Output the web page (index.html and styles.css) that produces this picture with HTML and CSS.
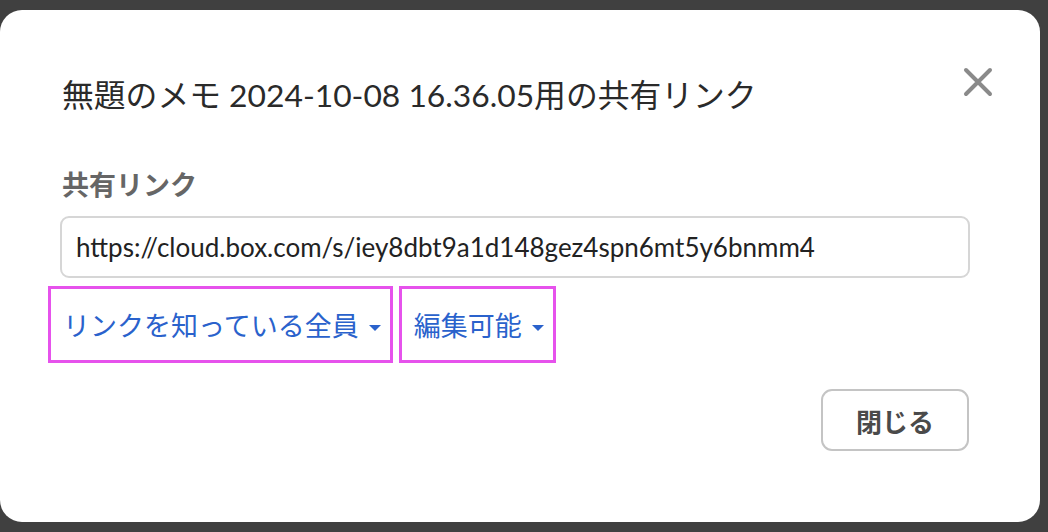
FILE: index.html
```html
<!DOCTYPE html>
<html lang="ja">
<head>
<meta charset="utf-8">
<link rel="stylesheet" href="styles.css">
</head>
<body>
<div class="modal">
  <button class="close" aria-label="閉じる">
    <svg width="30" height="30" viewBox="0 0 30 30"><path d="M3 3 L27 27 M27 3 L3 27" stroke="#8a8a8a" stroke-width="4" stroke-linecap="round"/></svg>
  </button>
  <h1 class="title">無題のメモ 2024-10-08 16.36.05用の共有リンク</h1>
  <div class="label">共有リンク</div>
  <div class="input">https://cloud.box.com/s/iey8dbt9a1d148gez4spn6mt5y6bnmm4</div>
  <div class="links">
    <div class="dd dd-who"><span>リンクを知っている全員</span><i class="caret"></i></div>
    <div class="dd dd-perm"><span>編集可能</span><i class="caret"></i></div>
  </div>
  <div class="footer">
    <button class="btn">閉じる</button>
  </div>
</div>
</body>
</html>
```
FILE: styles.css
```css
html, body {
  margin: 0;
  padding: 0;
  background: #404040;
  font-family: Lato, "Noto Sans CJK JP", sans-serif;
}
.modal {
  position: relative;
  margin-top: 10px;
  width: 1040px;
  height: 512px;
  box-sizing: border-box;
  background: #fff;
  border-radius: 22px;
  padding: 67px 70px 0 60px;
}
.close {
  position: absolute;
  top: 57px;
  right: 47px;
  width: 30px;
  height: 30px;
  padding: 0;
  border: 0;
  background: none;
  display: flex;
}
.title {
  margin: 0 0 0 2px;
  font-size: 31.8px;
  line-height: 36px;
  font-weight: 400;
  color: #2a2a2a;
}
.label {
  margin: 56px 0 0 2px;
  font-size: 27px;
  line-height: 32px;
  font-weight: 700;
  color: #666;
}
.input {
  margin-top: 15px;
  height: 62px;
  box-sizing: border-box;
  border: 2px solid #d6d6d6;
  border-radius: 9px;
  padding: 0 14px;
  display: flex;
  align-items: center;
  font-size: 26px;
  color: #222;
}
.links {
  margin: 8px 0 0 -12px;
  display: flex;
  gap: 6px;
}
.dd {
  height: 77px;
  box-sizing: border-box;
  border: 3px solid #e652ec;
  display: flex;
  align-items: center;
  padding: 0 9px 0 12px;
  color: #2a62cc;
  font-size: 27px;
}
.caret {
  width: 0;
  height: 0;
  border-left: 6px solid transparent;
  border-right: 6px solid transparent;
  border-top: 6px solid #2a62cc;
  margin-left: 10px;
  margin-top: 6px;
}
.footer {
  display: flex;
  justify-content: flex-end;
  margin-top: 26px;
}
.btn {
  width: 148px;
  height: 62px;
  box-sizing: border-box;
  border: 2px solid #c4c4c4;
  border-radius: 11px;
  background: #fff;
  font-family: Lato, "Noto Sans CJK JP", sans-serif;
  font-size: 26px;
  font-weight: 700;
  color: #4a4a4a;
  margin-right: 1px;
}
```
